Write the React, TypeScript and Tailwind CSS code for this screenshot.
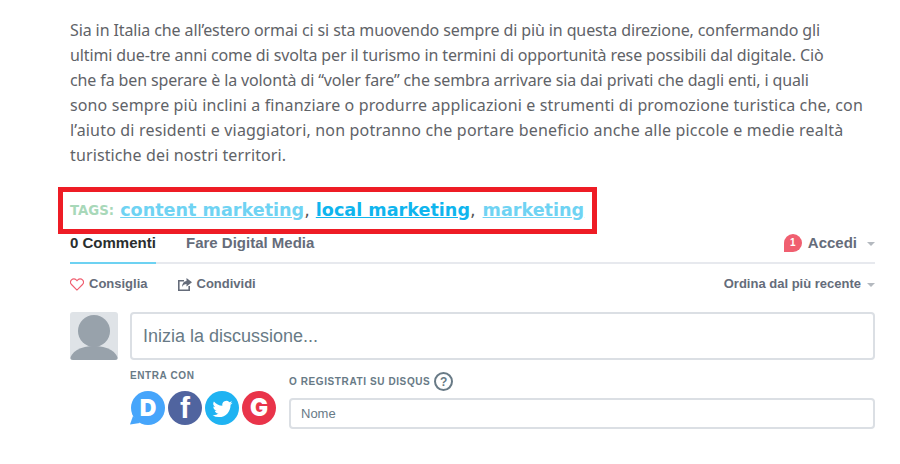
const lines = [
  { text: "Sia in Italia che all’estero ormai ci si sta muovendo sempre di più in questa direzione, confermando gli", cls: "tracking-[-0.11px]" },
  { text: "ultimi due-tre anni come di svolta per il turismo in termini di opportunità rese possibili dal digitale. Ciò", cls: "tracking-[-0.12px]" },
  { text: "che fa ben sperare è la volontà di “voler fare” che sembra arrivare sia dai privati che dagli enti, i quali", cls: "tracking-[-0.125px]" },
  { text: "sono sempre più inclini a finanziare o produrre applicazioni e strumenti di promozione turistica che, con", cls: "tracking-[0.13px]" },
  { text: "l’aiuto di residenti e viaggiatori, non potranno che portare beneficio anche alle piccole e medie realtà", cls: "tracking-[0.18px]" },
  { text: "turistiche dei nostri territori.", cls: "tracking-[0.12px]" },
];

function Caret() {
  return <span className="ml-[6px] mt-[1px] h-0 w-0 border-x-[4px] border-t-[4px] border-x-transparent border-t-[#b4b9bf]" />;
}

function Social() {
  return (
    <div className="mt-[8px] flex gap-[3px] pl-[1px]">
      <div className="relative flex h-[34px] w-[34px] items-center justify-center rounded-full bg-[#46a5fb] font-['Inter',sans-serif] text-[23px] font-black leading-none text-white">
        D
        <svg className="absolute bottom-0 left-[-1px]" width="10" height="9" viewBox="0 0 10 9">
          <path d="M3 0 L0 8.500 L10 7 Z" fill="#46a5fb" />
        </svg>
      </div>
      <div className="flex h-[34px] w-[34px] items-end justify-center overflow-hidden rounded-full bg-[#50649f] text-[30px] font-bold leading-[34px] text-white">
        f
      </div>
      <div className="flex h-[34px] w-[34px] items-center justify-center rounded-full bg-[#1fb3f2]">
        <svg width="23" height="23" viewBox="0 0 24 24" fill="#fff">
          <path d="M22.46 6c-.77.35-1.6.58-2.46.69a4.3 4.3 0 0 0 1.88-2.38 8.6 8.6 0 0 1-2.72 1.04 4.28 4.28 0 0 0-7.29 3.9A12.14 12.14 0 0 1 3.05 4.8a4.28 4.28 0 0 0 1.32 5.71 4.25 4.25 0 0 1-1.94-.54v.05a4.28 4.28 0 0 0 3.43 4.2 4.3 4.3 0 0 1-1.93.07 4.28 4.28 0 0 0 4 2.97A8.6 8.6 0 0 1 1.6 19.04a12.1 12.1 0 0 0 6.56 1.92c7.88 0 12.2-6.53 12.2-12.2l-.02-.55A8.7 8.7 0 0 0 22.46 6z" />
        </svg>
      </div>
      <div className="flex h-[34px] w-[34px] items-center justify-center rounded-full bg-[#e9344a] font-['Inter',sans-serif] text-[24px] font-black leading-none text-white">
        G
      </div>
    </div>
  );
}

export default function App() {
  return (
    <div className="h-[464px] w-[900px] overflow-hidden bg-white pl-[70px] pr-[25px] pt-[18px] font-['Liberation_Sans',sans-serif]">
      <div className="font-['Noto_Sans',sans-serif] text-[16px] leading-[25px] text-[#5f6368]">
        {lines.map((l) => (
          <p key={l.text} className={`whitespace-nowrap ${l.cls}`}>{l.text}</p>
        ))}
      </div>

      <div className="-ml-[12px] mt-[19px] flex h-[47px] w-[539px] items-center border-[5px] border-[#ee1c25] pl-[7px] font-['DejaVu_Sans',sans-serif] text-[17.6px] font-bold whitespace-nowrap">
        <span className="mr-[6px] text-[13.3px] text-[#a8d8b9]">TAGS:</span>
        <a className="text-[#6fd3f3] underline">content marketing</a>
        <span className="mr-[6px] font-normal text-[#555]">,</span>
        <a className="text-[#0fb5ee] underline">local marketing</a>
        <span className="mr-[7px] font-normal text-[#555]">,</span>
        <a className="text-[#6fd3f3] underline">marketing</a>
      </div>

      <div className="flex h-[30px] items-start justify-between border-b-2 border-[#e7e9ee] pt-[1px] text-[15px] font-bold">
        <div className="flex">
          <div className="h-[29px] w-[86px] border-b-2 border-[#6dd2f2] leading-[16px] text-[#2a2e2e]">0 Commenti</div>
          <div className="ml-[30px] leading-[16px] text-[#656c7a]">Fare Digital Media</div>
        </div>
        <div className="-mt-[1px] flex items-center leading-[16px] text-[#656c7a]">
          <span className="mr-[6px] flex h-[18px] w-[18px] items-center justify-center rounded-full rounded-bl-[3px] bg-[#f05f70] text-[10px] text-white">1</span>
          Accedi
          <span className="w-[4px]" />
          <Caret />
        </div>
      </div>

      <div className="mt-[12px] flex items-center justify-between text-[13px] font-bold leading-[16px] text-[#656c7a]">
        <div className="flex items-center">
          <svg width="14" height="13" viewBox="0 0 24 22" fill="none" stroke="#f05f70" strokeWidth="2">
            <path d="M12 20.500 2.600 11a5.800 5.800 0 0 1 0-8 5.600 5.600 0 0 1 8 0L12 4.400 13.400 3a5.600 5.600 0 0 1 8 0 5.800 5.800 0 0 1 0 8z" />
          </svg>
          <span className="ml-[5px]">Consiglia</span>
          <svg className="ml-[30px]" width="14" height="13" viewBox="0 0 14 13" fill="#656c7a">
            <path d="M0 2h6v1.600H1.600v7.800h8.800V8H12v5H0z" />
            <path d="M8.500 0 14 4.200 8.500 8.400V6C6.500 6 5 7 4 9c0-3.500 1.800-5.600 4.500-6z" />
          </svg>
          <span className="ml-[5px]">Condividi</span>
        </div>
        <div className="flex items-center">
          Ordina dal più recente
          <Caret />
        </div>
      </div>

      <div className="mt-[20px] flex gap-[12px]">
        <div className="relative h-[48px] w-[48px] shrink-0 overflow-hidden rounded-[3px] bg-[#dfe3e7]">
          <span className="absolute left-[8px] top-[3px] h-[32px] w-[32px] rounded-full bg-[#98a2ab]" />
          <span className="absolute bottom-[-14px] left-0 h-[28px] w-[48px] rounded-[50%] bg-[#98a2ab]" />
        </div>
        <div className="flex h-[48px] flex-1 items-center rounded-[4px] border-2 border-[#dbdfe4] pl-[11px] text-[18px] text-[#687a86]">
          Inizia la discussione...
        </div>
      </div>

      <div className="ml-[60px] mt-[9px] flex">
        <div className="w-[159px]">
          <div className="text-[10px] font-bold uppercase leading-[14px] tracking-[0.6px] text-[#687a86]">Entra con</div>
          <Social />
        </div>
        <div className="flex-1 pt-[3px]">
          <div className="flex items-center text-[10px] font-bold uppercase leading-[14px] tracking-[0.6px] text-[#687a86]">
            O registrati su Disqus
            <span className="ml-[4px] flex h-[19px] w-[19px] items-center justify-center rounded-full border-2 border-[#687a86] text-[12px]">?</span>
          </div>
          <div className="mt-[7px] flex h-[31px] items-center rounded-[4px] border-2 border-[#dbdfe4] pl-[10px] text-[13px] text-[#687a86]">Nome</div>
        </div>
      </div>
    </div>
  );
}
